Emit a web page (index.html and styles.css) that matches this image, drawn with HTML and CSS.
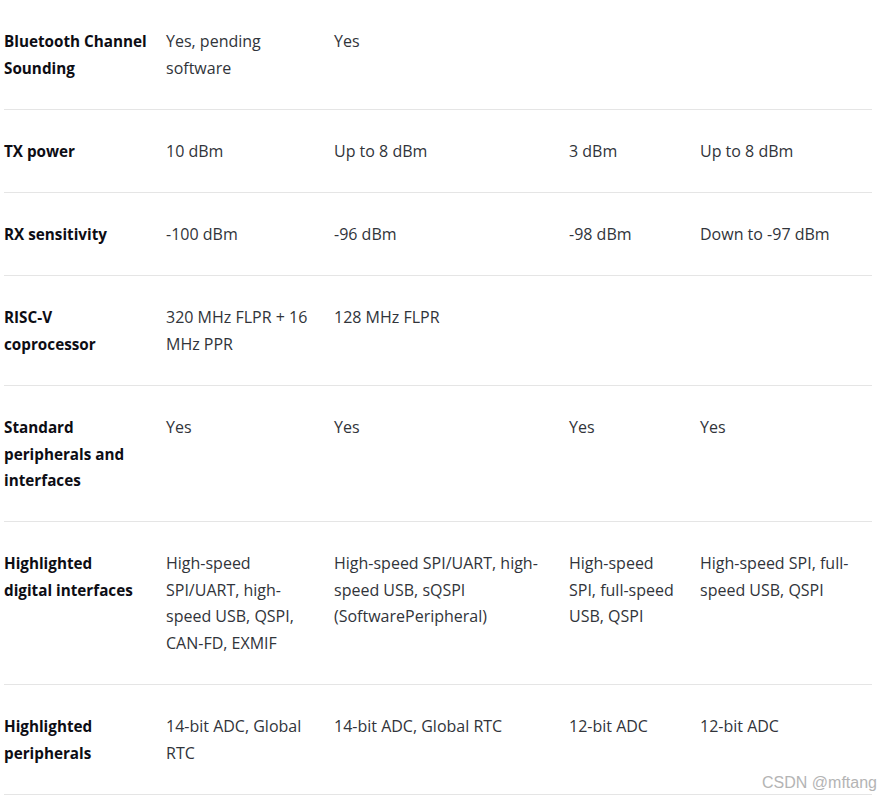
FILE: index.html
```html
<!DOCTYPE html>
<html lang="en">
<head>
<meta charset="utf-8">
<title>Comparison table</title>
<link rel="stylesheet" href="styles.css">
</head>
<body>
<div class="page">
  <table class="spec">
    <colgroup>
      <col class="c1"><col class="c2"><col class="c3"><col class="c4"><col class="c5">
    </colgroup>
    <tbody>
      <tr><th>Bluetooth Channel Sounding</th><td>Yes, pending software</td><td>Yes</td><td></td><td></td></tr>
      <tr><th>TX power</th><td>10 dBm</td><td>Up to 8 dBm</td><td>3 dBm</td><td>Up to 8 dBm</td></tr>
      <tr><th>RX sensitivity</th><td>-100 dBm</td><td>-96 dBm</td><td>-98 dBm</td><td>Down to -97 dBm</td></tr>
      <tr><th>RISC-V<br>coprocessor</th><td>320 MHz FLPR + 16 MHz PPR</td><td>128 MHz FLPR</td><td></td><td></td></tr>
      <tr><th>Standard peripherals and interfaces</th><td>Yes</td><td>Yes</td><td>Yes</td><td>Yes</td></tr>
      <tr><th>Highlighted<br>digital interfaces</th><td>High-speed SPI/UART, high-speed USB, QSPI, CAN-FD, EXMIF</td><td>High-speed SPI/UART, high-speed USB, sQSPI (SoftwarePeripheral)</td><td>High-speed SPI, full-speed USB, QSPI</td><td>High-speed SPI, full-speed USB, QSPI</td></tr>
      <tr><th>Highlighted peripherals</th><td>14-bit ADC, Global RTC</td><td>14-bit ADC, Global RTC</td><td>12-bit ADC</td><td>12-bit ADC</td></tr>
    </tbody>
  </table>
  <div class="watermark">CSDN @mftang</div>
</div>
</body>
</html>
```
FILE: styles.css
```css
html, body {
  margin: 0;
  padding: 0;
  background: #ffffff;
}
.page {
  position: relative;
  width: 881px;
  height: 798px;
  overflow: hidden;
  padding: 0 0 0 4px;
  box-sizing: border-box;
}
.spec {
  margin-top: 0;
  width: 868px;
  table-layout: fixed;
  border-collapse: collapse;
  font-family: "Open Sans", "Noto Sans", sans-serif;
  font-size: 16px;
  line-height: 26.5px;
  color: #31343a;
}
.c1 { width: 162px; }
.c2 { width: 168px; }
.c3 { width: 235px; }
.c4 { width: 131px; }
.c5 { width: 172px; }
.spec tr {
  border-bottom: 1px solid #e5e5e5;
}
.spec th,
.spec td {
  text-align: left;
  vertical-align: top;
  padding: 28px 16px 27.75px 0;
}
.spec th {
  font-weight: 700;
  font-size: 15.25px;
  color: #0d0d14;
}
.spec td {
  font-weight: 400;
}
.watermark {
  position: absolute;
  right: 4px;
  top: 773px;
  font-family: "Liberation Sans", Arial, sans-serif;
  font-size: 16px;
  color: #b4b4b4;
  line-height: 20px;
}
```
